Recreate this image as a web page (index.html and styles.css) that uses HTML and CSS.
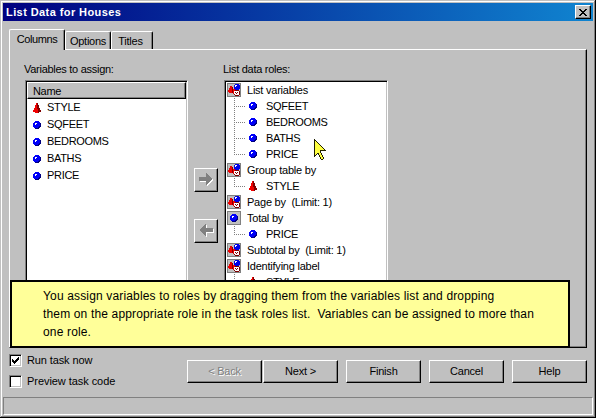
FILE: index.html
```
<!DOCTYPE html>
<html lang="en">
<head>
<meta charset="utf-8">
<title>List Data for Houses</title>
<link rel="stylesheet" href="styles.css">
</head>
<body>
<svg class="defs" aria-hidden="true">
  <symbol id="ball" viewBox="0 0 8 8"><g shape-rendering="crispEdges"><path fill="#0000f8" d="M2 0h4v1h1v1h1v4h-1v1h-1v1h-4v-1h-1v-1h-1v-4h1v-1h1z"/><path fill="#000080" d="M7 2h1v4h-1v1h-1v1h-4v-1h3v-1h1v-1h1z"/><path fill="#fff" d="M2 2h2v1h-1v1h-1z"/></g></symbol>
  <symbol id="cone" viewBox="0 0 8 10"><g shape-rendering="crispEdges"><path fill="#f00000" d="M3 0h2v2h1v3h1v2h1v2h-2v1h-4v-1h-2v-2h1v-2h1v-3h1z"/><path fill="#800000" d="M4 0h1v2h1v3h1v2h1v2h-2v1h-1v-4h-1z"/></g></symbol>
  <symbol id="mixed" viewBox="0 0 14 14"><g shape-rendering="crispEdges"><path fill="#808080" d="M0 0h14v14h-14z"/><path fill="#c0c0c0" d="M1 1h12v12h-12z"/><path fill="#f00000" d="M4 3h1v1h1v2h2v3h1v2h-3v-1h-4v-1h-1v-2h1v-2h1v-2h1z"/><path fill="#800000" d="M5 4h1v6h-1z"/><path fill="#0000e8" d="M8 1h4v1h1v4h-1v1h-4v-1h-1v-4h1z"/><path fill="#fff" d="M8 2h2v1h-1v1h-1zM8 7h4v1h1v4h-1v1h-4v-1h-1v-4h1z"/><path fill="#800000" d="M8 7h4v1h-4zM12 8h1v4h-1zM8 12h4v1h-4zM7 11h1v1h-1zM8 9h1v1h-1zM10 9h1v1h-1zM9 10h1v1h-1z"/></g></symbol>
  <symbol id="numeric" viewBox="0 0 14 14"><path fill="#808080" d="M0 0h14v14h-14z"/><path fill="#c0c0c0" d="M1 1h12v12h-12z"/><use href="#ball" x="3" y="3" width="8" height="8"/></symbol>
  <symbol id="arrow" viewBox="0 0 14 12"><path shape-rendering="crispEdges" d="M0 4h7v-4h1v1h1v1h1v1h1v1h1v1h1v2h-1v1h-1v1h-1v1h-1v1h-1v1h-1v-4h-7z"/></symbol>
</svg>
<div class="window">
  <header class="titlebar"><span class="title">List Data for Houses</span>
    <button class="close" aria-label="Close"><svg width="8" height="7" viewBox="0 0 8 7" shape-rendering="crispEdges"><path d="M0 0h2v1h1v1h2v-1h1v-1h2v1h-1v1h-1v1h-1v1h1v1h1v1h1v1h-2v-1h-1v-1h-2v1h-1v1h-2v-1h1v-1h1v-1h1v-1h-1v-1h-1v-1h-1z"/></svg></button>
  </header>
  <nav class="tabs">
    <div class="tab active"><span>Columns</span></div>
    <div class="tab options"><span>Options</span></div>
    <div class="tab titles"><span>Titles</span></div>
  </nav>
  <main class="pane">
    <section class="column">
      <div class="caption assign">Variables to assign:</div>
      <div class="list variables">
        <div class="head">Name</div>
        <div class="row"><svg class="cone"><use href="#cone"/></svg><span>STYLE</span></div>
        <div class="row"><svg class="ball"><use href="#ball"/></svg><span>SQFEET</span></div>
        <div class="row"><svg class="ball"><use href="#ball"/></svg><span>BEDROOMS</span></div>
        <div class="row"><svg class="ball"><use href="#ball"/></svg><span>BATHS</span></div>
        <div class="row"><svg class="ball"><use href="#ball"/></svg><span>PRICE</span></div>
      </div>
    </section>
    <div class="movers">
      <button class="mover" aria-label="Add"><svg width="16" height="14"><use class="shine" href="#arrow" x="1" y="1" width="14" height="12"/><use class="shade" href="#arrow" width="14" height="12"/></svg></button>
      <button class="mover back" aria-label="Remove"><svg width="16" height="14"><g transform="translate(14 0) scale(-1 1)"><use class="shine" href="#arrow" x="-1" y="1" width="14" height="12"/><use class="shade" href="#arrow" width="14" height="12"/></g></svg></button>
    </div>
    <section class="column">
      <div class="caption">List data roles:</div>
      <div class="list tree">
        <div class="role"><svg><use href="#mixed"/></svg><span>List variables</span></div>
        <div class="child"><i></i><svg class="ball"><use href="#ball"/></svg><span>SQFEET</span></div>
        <div class="child"><i></i><svg class="ball"><use href="#ball"/></svg><span>BEDROOMS</span></div>
        <div class="child"><i></i><svg class="ball"><use href="#ball"/></svg><span>BATHS</span></div>
        <div class="child last"><i></i><svg class="ball"><use href="#ball"/></svg><span>PRICE</span></div>
        <div class="role"><svg><use href="#mixed"/></svg><span>Group table by</span></div>
        <div class="child last"><i></i><svg class="cone"><use href="#cone"/></svg><span>STYLE</span></div>
        <div class="role"><svg><use href="#mixed"/></svg><span>Page by&nbsp; (Limit: 1)</span></div>
        <div class="role"><svg><use href="#numeric"/></svg><span>Total by</span></div>
        <div class="child last"><i></i><svg class="ball"><use href="#ball"/></svg><span>PRICE</span></div>
        <div class="role"><svg><use href="#mixed"/></svg><span>Subtotal by&nbsp; (Limit: 1)</span></div>
        <div class="role"><svg><use href="#mixed"/></svg><span>Identifying label</span></div>
        <div class="child last"><i></i><svg class="cone"><use href="#cone"/></svg><span>STYLE</span></div>
      </div>
    </section>
  </main>
  <footer class="actions">
    <div class="checks">
      <label><span class="box"><svg width="7" height="7" viewBox="0 0 7 7" shape-rendering="crispEdges"><path d="M0 2h1v1h1v1h1v-1h1v-1h1v-1h1v-1h1v3h-1v1h-1v1h-1v1h-1v1h-1v-1h-1v-1h-1z"/></svg></span><span class="run">Run task now</span></label>
      <label><span class="box"></span><span>Preview task code</span></label>
    </div>
    <div class="buttons">
      <button disabled>&lt; Back</button><button class="next">Next &gt;</button><button>Finish</button><button>Cancel</button><button>Help</button>
    </div>
  </footer>
  <div class="status"></div>
  <aside class="note"><p>You assign variables to roles by dragging them from the variables list and dropping</p><p>them on the appropriate role in the task roles list.&nbsp; Variables can be assigned to more than</p><p>one role.</p></aside>
  <svg class="cursor" width="12" height="21" viewBox="0 0 12 21" shape-rendering="crispEdges"><path fill="#202000" d="M0 0h1v1h1v1h1v1h1v1h1v1h1v1h1v1h1v1h1v1h1v1h1v1h1v1h-5v2h1v2h1v2h1v2h-1v1h-2v-1h-1v-2h-1v-2h-1v-1h-1v1h-1v1h-1v1h-1z"/><path fill="#ffff40" d="M1 2h1v1h1v1h1v1h1v1h1v1h1v1h1v1h1v1h1v1h-4v3h1v2h1v2h1v2h-2v-2h-1v-2h-1v-2h-2v1h-1v1h-1z"/></svg>
</div>
</body>
</html>
```
FILE: styles.css
```
* { box-sizing: border-box; }
body { margin: 0; background: #c0c0c0; color: #000; font: 11px/13px "Liberation Sans", Arial, sans-serif; }
span, p, .caption, .head { white-space: pre; }
button { margin: 0; padding: 0; font: inherit; color: #000; background: #c0c0c0; border: 1px solid; border-color: #fff #000 #000 #fff; box-shadow: inset -1px -1px #808080; border-radius: 0; display: flex; align-items: center; justify-content: center; }
svg { display: block; flex: none; }
.defs { position: absolute; width: 0; height: 0; }
.window { position: relative; width: 596px; height: 418px; overflow: hidden; display: flex; flex-direction: column; padding: 3px 3px 2px; background: #c0c0c0; box-shadow: inset -1px -1px #000, inset 1px 1px #c0c0c0, inset -2px -2px #808080, inset 2px 2px #fff; }
.titlebar { height: 18px; flex: none; display: flex; align-items: center; justify-content: space-between; padding: 0 2px 0 3px; background: linear-gradient(90deg, #000080, #1084d0); color: #fff; font-weight: bold; }
.title { letter-spacing: .42px; }
.close { width: 16px; height: 14px; }
.tabs { display: flex; align-items: flex-end; height: 28px; margin-left: 6px; flex: none; letter-spacing: -.25px; }
.tab { height: 18px; border: 1px solid; border-color: #fff #000 transparent #fff; border-bottom: 0; border-radius: 2px 2px 0 0; box-shadow: inset -1px 0 #808080; display: flex; justify-content: center; padding-top: 3px; background: #c0c0c0; }
.tab.active { width: 56px; height: 21px; margin-bottom: -1px; position: relative; letter-spacing: -.4px; }
.options { width: 46px; }
.titles { width: 42px; padding-right: 3px; }
.pane { flex: none; height: 299px; margin: 0 6px; border: 1px solid; border-color: #fff #000 #000 #fff; box-shadow: inset -1px -1px #808080; display: flex; padding: 13px 0 0 15px; overflow: hidden; }
.column { width: 163px; }
.caption { height: 17px; margin-left: -1px; letter-spacing: -.28px; }
.list { height: 240px; background: #fff; border: 1px solid; border-color: #808080 #fff #fff #808080; box-shadow: inset 1px 1px #000, inset -1px 0 #c0c0c0; padding: 1px 1px 0; overflow: hidden; }
.variables { letter-spacing: -.32px; }
.head { height: 17px; background: #c0c0c0; border: 1px solid; border-color: #fff #000 #000 #fff; box-shadow: inset -1px -1px #808080; padding: 2px 0 0 5px; }
.row { height: 17px; display: flex; align-items: center; padding-left: 6px; gap: 6px; }
.ball { width: 8px; height: 8px; }
.cone { width: 8px; height: 10px; }
.movers { width: 36px; padding: 105px 0 0 6px; }
.mover { width: 24px; height: 24px; padding-left: 1px; }
.mover.back { margin-top: 27px; }
.shine { fill: #fff; }
.shade { fill: #808080; }
.tree { width: 164px; padding-left: 2px; letter-spacing: -.23px; }
.role { height: 16px; display: flex; align-items: center; gap: 6px; }
.role svg { width: 14px; height: 14px; }
.child { height: 16px; display: flex; align-items: center; padding-left: 7px; letter-spacing: -.32px; }
.child i { align-self: stretch; width: 12px; margin-right: 3px; background: repeating-linear-gradient(180deg, #808080 0 1px, transparent 1px 2px) 0 0 / 1px 100% no-repeat, repeating-linear-gradient(90deg, #808080 0 1px, transparent 1px 2px) 0 8px / 100% 1px no-repeat; }
.child.last i { background-size: 1px 9px, 100% 1px; }
.child span { margin-left: 9px; }
.actions { display: flex; height: 49px; padding: 6px 6px 0; }
.checks { width: 178px; letter-spacing: -.06px; }
.checks label { display: flex; align-items: center; gap: 5px; height: 13px; margin-bottom: 8px; }
.run { letter-spacing: -.12px; }
.box { width: 13px; height: 13px; background: #fff; border: 1px solid; border-color: #808080 #fff #fff #808080; box-shadow: inset 1px 1px #000, inset -1px -1px #c0c0c0; padding: 2px; }
.buttons { display: flex; gap: 8px; padding-top: 6px; }
.buttons button { width: 75px; height: 23px; letter-spacing: -.2px; }
.buttons .next { margin-left: -7px; }
.buttons button:disabled { color: #808080; text-shadow: 1px 1px #fff; }
.status { height: 18px; border: 1px solid; border-color: #808080 #fff #fff #808080; }
.note { position: absolute; left: 10px; top: 280px; width: 560px; height: 68px; border: 2px solid #000; background: #ffff99; padding: 5px 0 0 31px; font-size: 12px; line-height: 18px; letter-spacing: .155px; }
.note p { margin: 0; }
.cursor { position: absolute; left: 314px; top: 139px; }
```
